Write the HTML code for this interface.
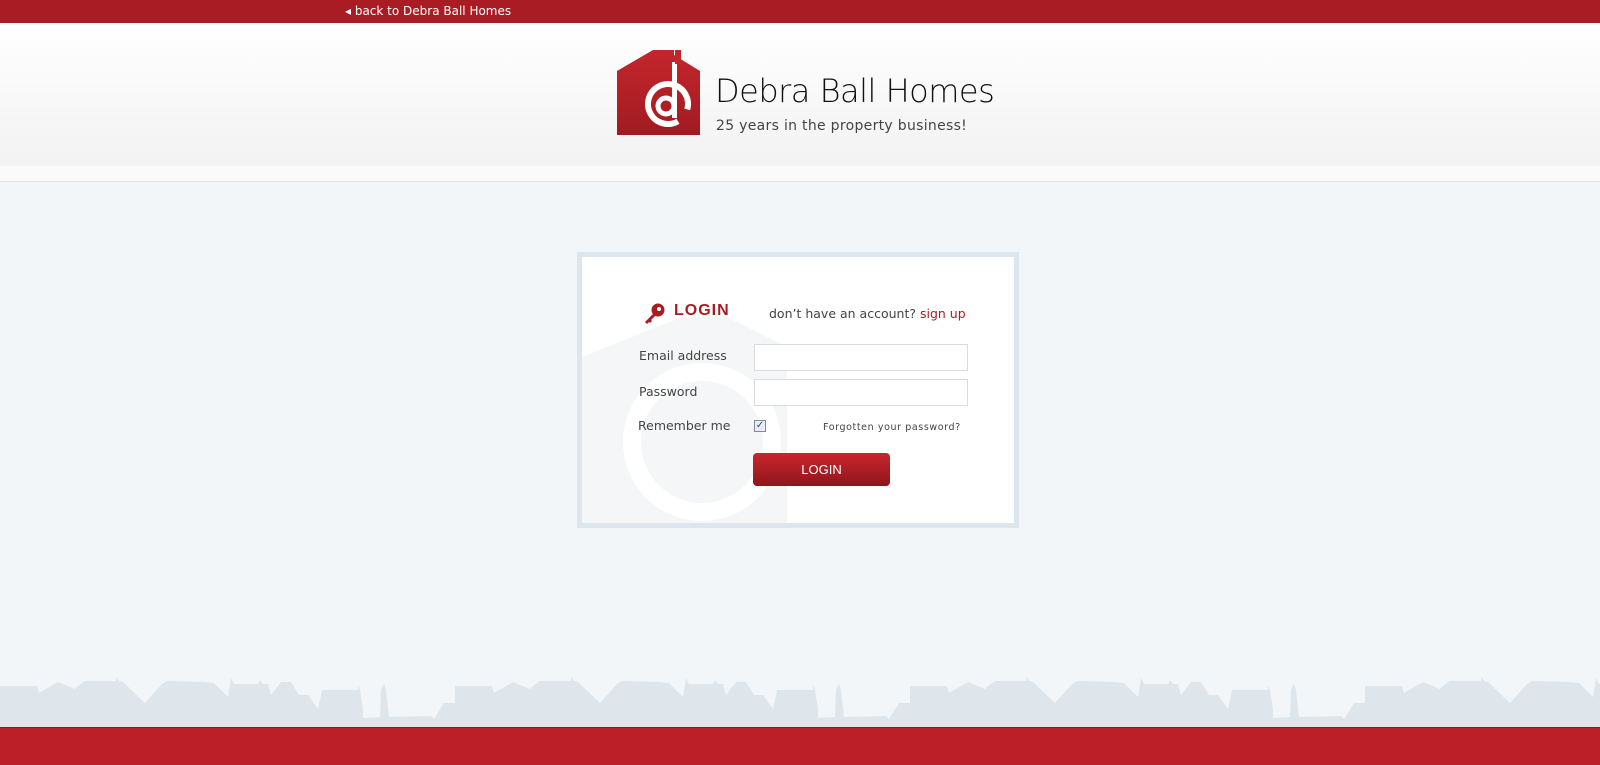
<!DOCTYPE html>
<html><head><meta charset="utf-8"><style>
*{margin:0;padding:0;box-sizing:border-box}
body{width:1600px;height:765px;overflow:hidden;background:#f2f6f8;font-family:"DejaVu Sans","Liberation Sans",sans-serif;position:relative}
.top{position:absolute;left:0;top:0;width:1600px;height:23px;background:#a91c24}
.top span{position:absolute;left:345px;top:4px;color:#fff;font-size:12px}
.hdr{position:absolute;left:0;top:23px;width:1600px;height:143px;background:linear-gradient(#fff,#f2f2f2)}
.strip{position:absolute;left:0;top:166px;width:1600px;height:16px;background:#fafafa;border-bottom:1px solid #dfe3e6}
.t1{position:absolute;left:715px;top:72px;font-family:"DejaVu Sans",sans-serif;font-size:32px;color:#111;letter-spacing:-0.5px;font-weight:300}
.t2{position:absolute;left:716px;top:118px;font-size:14px;color:#444;letter-spacing:0.3px}
.box{position:absolute;left:577px;top:252px;width:442px;height:276px;border:5px solid #dde6ec;background:#fff;overflow:hidden}
.lbl{position:absolute;font-size:12.5px;color:#444}
.inp{position:absolute;left:172px;width:214px;height:27px;border:1px solid #d9dcde;background:#fff}
.btn{position:absolute;left:171px;top:196px;width:137px;height:33px;border-radius:4px;background:linear-gradient(#c9252d,#8f161c);color:#fff;font-size:13px;text-align:center;line-height:33px;font-family:"Liberation Sans",sans-serif}
.foot{position:absolute;left:0;top:727px;width:1600px;height:38px;background:#bd1f28;border-top:1px solid #8a1a1f}
</style></head><body>
<div class="top"><span>◂ back to Debra Ball Homes</span></div>
<div class="hdr"></div>
<div class="strip"></div>
<svg style="position:absolute;left:616px;top:48px" width="86" height="88" viewBox="0 0 86 88">
<defs><linearGradient id="g" x1="0" y1="0" x2="0" y2="1"><stop offset="0" stop-color="#c4262c"/><stop offset="1" stop-color="#a11b21"/></linearGradient></defs>
<path d="M1 23 L37 2 L58 2 L58 7 L84 23 L84 87 L1 87Z" fill="url(#g)"/>
<circle cx="52" cy="56" r="20" fill="none" stroke="#fff" stroke-width="6" stroke-dasharray="110 20" transform="rotate(60 52 56)"/>
<circle cx="50" cy="58" r="8" fill="none" stroke="#fff" stroke-width="5"/>
<rect x="56" y="14" width="5" height="56" fill="#fff"/>
<rect x="59" y="2" width="6" height="14" fill="#c4262c"/>
</svg>
<div class="t1">Debra Ball Homes</div>
<div class="t2">25 years in the property business!</div>
<div class="box">
<svg style="position:absolute;left:0;top:60px" width="210" height="215"><path d="M0 40 L100 0 L145 0 L205 30 L205 215 L0 215Z" fill="#f5f6f7"/><circle cx="120" cy="125" r="70" fill="none" stroke="#fff" stroke-width="18"/></svg>
<svg style="position:absolute;left:61px;top:45px" width="24" height="24" viewBox="0 0 24 24"><circle cx="15" cy="8" r="6.5" fill="#a91c24"/><circle cx="16" cy="7" r="2" fill="#fff"/><path d="M11 11 L2 20 L4 22 L6 20 L7 21 L9 19 L8 18 L13 13Z" fill="#a91c24"/></svg>
<div style="position:absolute;left:92px;top:45px;color:#a91c24;font-size:16px;font-weight:bold;letter-spacing:1px;font-family:'Liberation Sans',sans-serif">LOGIN</div>
<div class="lbl" style="left:187px;top:49px">don’t have an account? <span style="color:#a91c24">sign up</span></div>
<div class="lbl" style="left:57px;top:91px">Email address</div>
<div class="inp" style="top:87px"></div>
<div class="lbl" style="left:57px;top:127px">Password</div>
<div class="inp" style="top:122px"></div>
<div class="lbl" style="left:56px;top:161px">Remember me</div>
<div style="position:absolute;left:172px;top:163px;width:12px;height:12px;border:1px solid #889;background:#e8ecf4;color:#2a3f9a;font-size:10px;line-height:10px;text-align:center">✓</div>
<div class="lbl" style="left:241px;top:165px;font-size:9.5px;letter-spacing:0.6px">Forgotten your password?</div>
<div class="btn">LOGIN</div>
</div>
<svg style="position:absolute;left:0;top:660px" width="1600" height="67">
<defs><path id="s" d="M0 26 L37 26 L39 33 L58 22 L75 29 L78 26 L85 21 L116 21 L117 17 L119 21 L123 22 L145 43 L162 24 L167 21 L204 22 L214 23 L228 37 L231 18 L234 24 L258 24 L260 20 L263 24 L268 24 L271 35 L281 22 L291 22 L299 35 L308 35 L318 49 L322 30 L358 30 L358 25 L360 30 L363 49 L363 58 L380 57 L381 30 L384 23 L386 30 L389 57 L431 56 L434 59 L444 43 L455 43 L455 67 L0 67Z"/></defs>
<g fill="#dfe6eb"><use href="#s"/><use href="#s" transform="translate(455 0)"/><use href="#s" transform="translate(910 0)"/><use href="#s" transform="translate(1365 0)"/></g>
</svg>
<div class="foot"></div>
</body></html>
